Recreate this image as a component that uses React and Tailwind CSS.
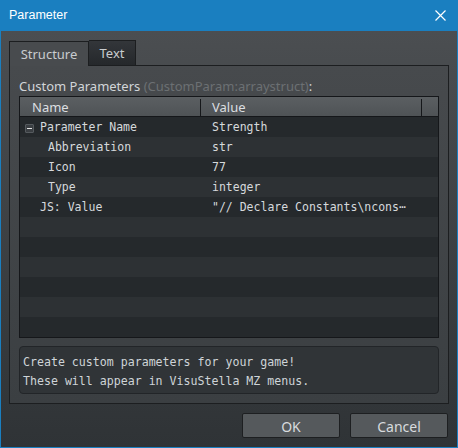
const rows = [
  { name: "Parameter Name", value: "Strength", indent: 0, toggle: true },
  { name: "Abbreviation", value: "str", indent: 1 },
  { name: "Icon", value: "77", indent: 1 },
  { name: "Type", value: "integer", indent: 1 },
  { name: "JS: Value", value: '"// Declare Constants\\ncons\u22EF', indent: 0 },
];

const TOTAL_ROWS = 11;

function CloseIcon() {
  return (
    <svg width="11" height="11" viewBox="0 0 11 11" className="block">
      <path d="M0.5 0.5 L10.5 10.5 M10.5 0.5 L0.5 10.5" stroke="#ffffff" strokeWidth="1.2" fill="none" />
    </svg>
  );
}

function ToggleBox() {
  return (
    <span className="flex h-[9px] w-[9px] items-center justify-center rounded-[1px] border border-[#555a5e] bg-[#3a3e42]">
      <span className="block h-px w-[5px] bg-[#e6e6e6]" />
    </span>
  );
}

function TreeRow({ row, index }) {
  const striped = index % 2 === 0 ? "bg-[#25292c]" : "bg-[#2d3134]";
  return (
    <div className={`flex h-[20px] items-center pt-[2px] ${striped}`}>
      <div className="flex w-[181px] items-center">
        {row && (
          <>
            <div className="flex w-[20px] justify-end pr-[6px]">{row.toggle && <ToggleBox />}</div>
            <span className={row.indent ? "pl-[8px]" : ""}>{row.name}</span>
          </>
        )}
      </div>
      {row && <span className="pl-[11px]">{row.value}</span>}
    </div>
  );
}

export default function App() {
  const lines = Array.from({ length: TOTAL_ROWS }, (_, i) => rows[i]);

  return (
    <div className="flex h-[448px] w-[458px] flex-col border-x border-b border-[#1a7fc0] font-['Noto_Sans','Open_Sans',sans-serif]">
      <div className="flex h-[31px] shrink-0 items-center justify-between bg-[#1a7fc0] pl-[8px] pr-[11px] font-['Liberation_Sans',sans-serif] text-[12.5px] text-white">
        <span>Parameter</span>
        <CloseIcon />
      </div>

      <div className="flex flex-1 flex-col bg-gradient-to-b from-[#4b4e51] to-[#2f3336] px-[8px] pt-[9px]">
        {/* tabs */}
        <div className="flex h-[25px] items-end">
          <div className="relative z-10 -mb-px flex h-[25px] w-[80px] items-center justify-center border-x border-t border-[#1c1e20] bg-[#484b4e] pt-[1px] text-[13px] text-[#c8cccf]">
            Structure
          </div>
          <div className="flex h-[25px] w-[47px] items-center justify-center border-r border-t border-[#1c1e20] bg-gradient-to-b from-[#33363a] to-[#25282b] pt-[1px] text-[13px] text-[#c8cccf]">
            Text
          </div>
        </div>

        <div className="flex h-[339px] flex-col border border-[#1c1e20] bg-gradient-to-b from-[#474a4d] to-[#3b3f42] px-[9px] pt-[12px]">
          <div className="h-[18px] text-[13px] leading-[16px] text-[#d2d5d8]">
            Custom Parameters <span className="text-[#6c7073]">(CustomParam:arraystruct)</span>:
          </div>

          <div className="flex flex-col border border-[#15171a] bg-[#25292c]">
            <div className="flex h-[20px] border-b border-[#15171a] bg-gradient-to-b from-[#5b5f62] to-[#4f5356] pt-[2px] text-[13px] text-[#dcdfe1]">
              <div className="flex w-[181px] items-center border-r border-[#15171a] pl-[12px]">Name</div>
              <div className="flex w-[221px] items-center border-r border-[#15171a] pl-[11px]">Value</div>
              <div className="flex-1" />
            </div>
            <div className="font-['DejaVu_Sans_Mono',monospace] text-[11.5px] text-[#d6d9dc]">
              {lines.map((row, i) => (
                <TreeRow key={i} row={row} index={i} />
              ))}
            </div>
          </div>

          <div className="mt-[8px] flex h-[48px] flex-col justify-center rounded-[4px] border border-[#222528] bg-[#303437] pl-[3px] pt-[3px] font-['DejaVu_Sans_Mono',monospace] text-[11.6px] leading-[19px] text-[#cfd4d8]">
            <span>Create custom parameters for your game!</span>
            <span>These will appear in VisuStella MZ menus.</span>
          </div>
        </div>

        <div className="flex flex-1 items-start justify-end gap-[10px] pr-[1px] pt-[9px]">
          <button className="h-[25px] w-[98px] rounded-[2px] border border-[#1d1f21] bg-[#55595c] pt-[1px] text-[14px] text-[#d8dbde]">
            OK
          </button>
          <button className="h-[25px] w-[98px] rounded-[2px] border border-[#1d1f21] bg-[#55595c] pt-[1px] text-[14px] text-[#d8dbde]">
            Cancel
          </button>
        </div>
      </div>
    </div>
  );
}
